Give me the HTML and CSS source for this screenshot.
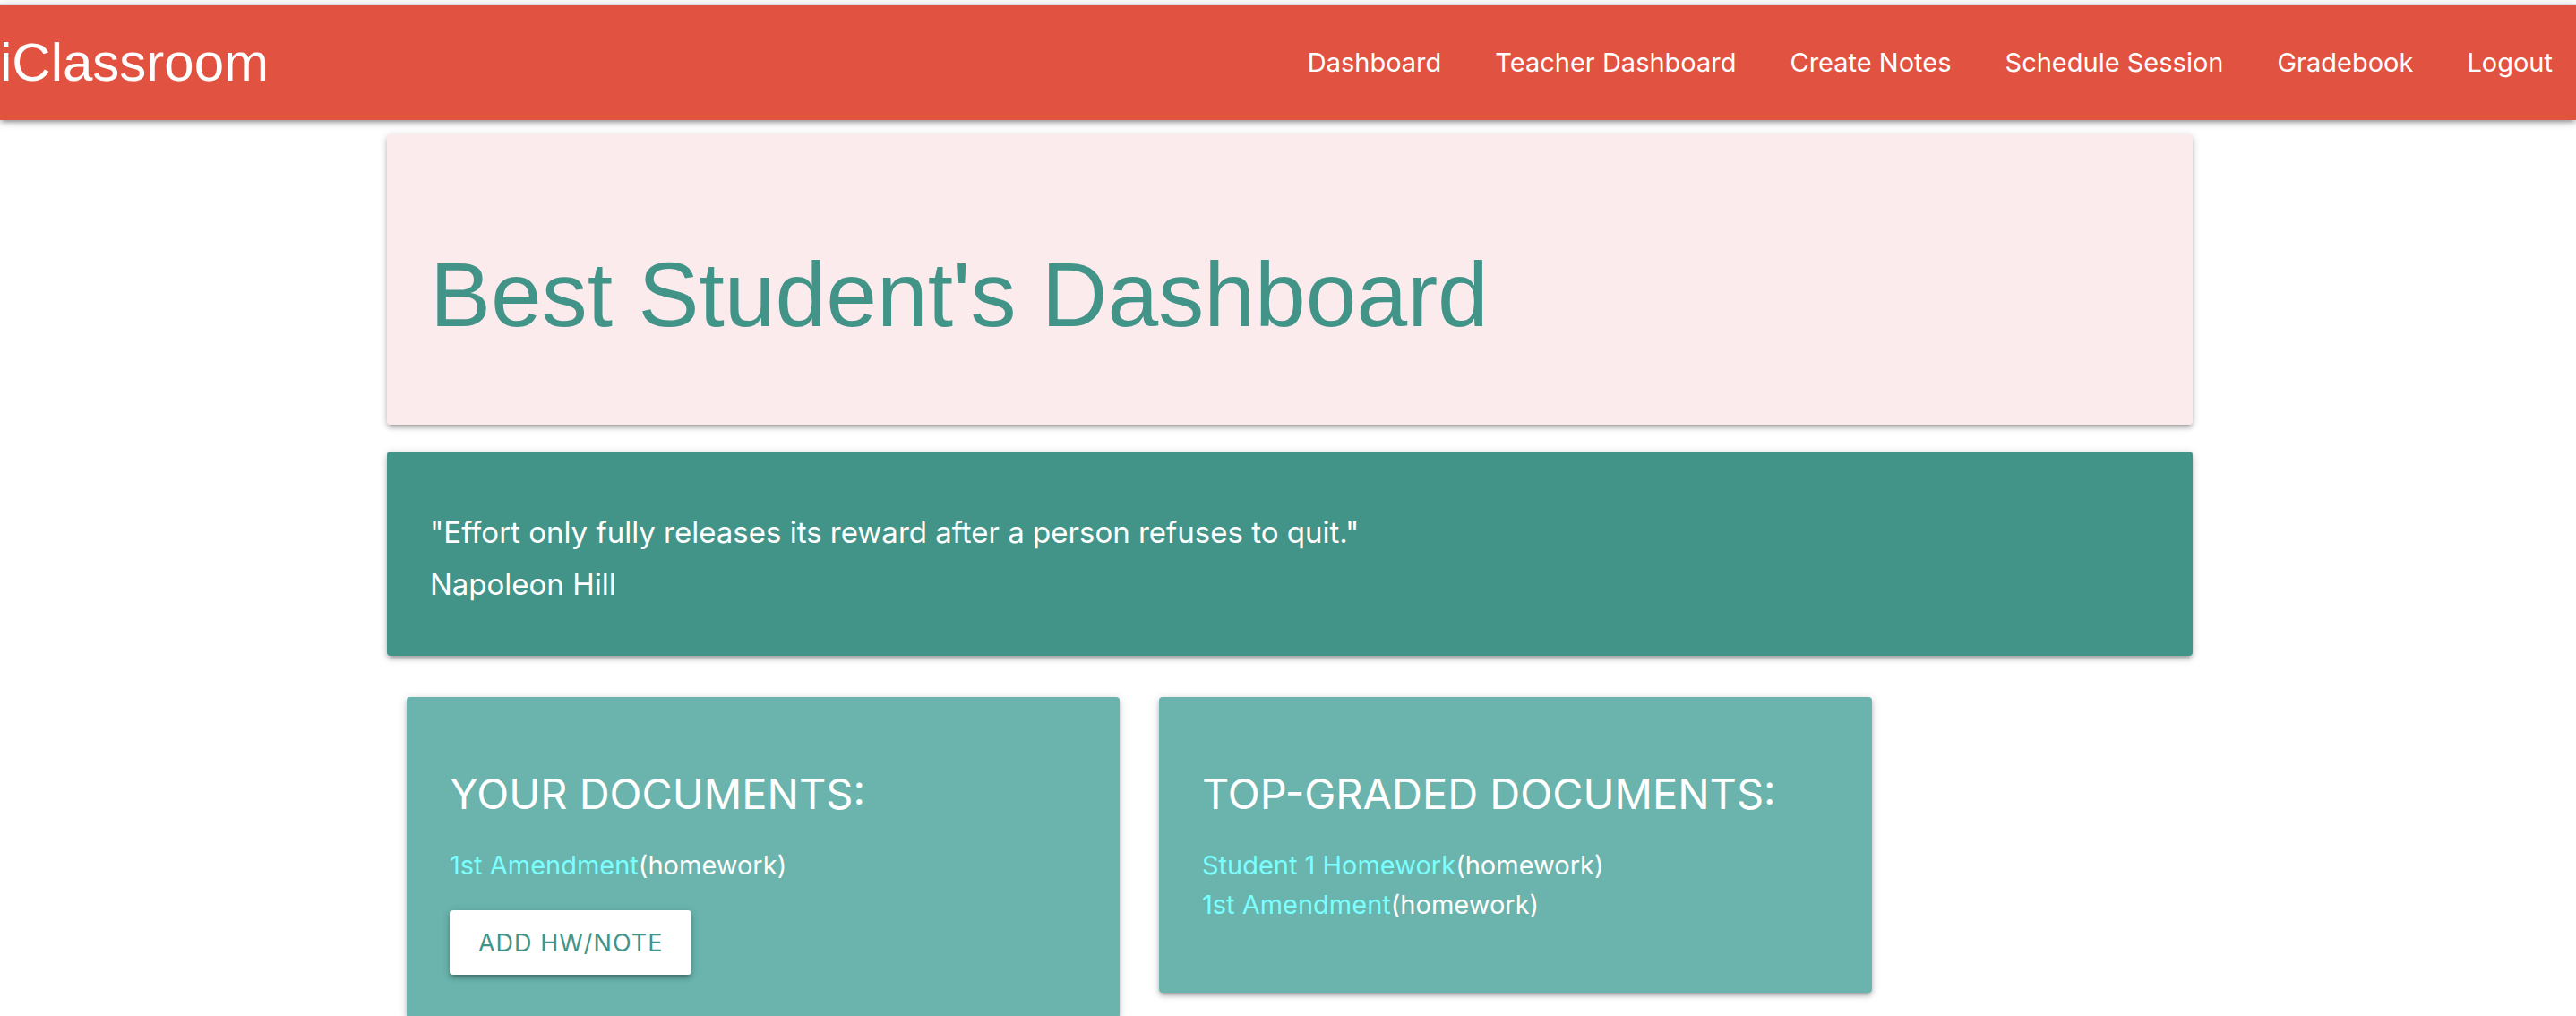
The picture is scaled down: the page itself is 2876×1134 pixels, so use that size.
FILE: index.html
```html
<!DOCTYPE html>
<html lang="en">
<head>
<meta charset="utf-8">
<meta name="viewport" content="width=device-width, initial-scale=1">
<title>iClassroom</title>
<link rel="stylesheet" href="styles.css">
</head>
<body>
<header class="topbar">
  <a class="brand" href="#">iClassroom</a>
  <nav class="nav">
    <a href="#">Dashboard</a>
    <a href="#">Teacher Dashboard</a>
    <a href="#">Create Notes</a>
    <a href="#">Schedule Session</a>
    <a href="#">Gradebook</a>
    <a href="#">Logout</a>
  </nav>
</header>
<main class="container">
  <section class="card banner">
    <h1 class="banner-title">Best Student's Dashboard</h1>
  </section>
  <section class="card quote">
    <p>"Effort only fully releases its reward after a person refuses to quit."</p>
    <p>Napoleon Hill</p>
  </section>
  <div class="row">
    <section class="card docs">
      <h2 class="docs-title">YOUR DOCUMENTS:</h2>
      <ul class="docs-list">
        <li><a href="#">1st Amendment</a>(homework)</li>
      </ul>
      <button class="btn" type="button">ADD HW/NOTE</button>
    </section>
    <section class="card docs">
      <h2 class="docs-title">TOP-GRADED DOCUMENTS:</h2>
      <ul class="docs-list">
        <li><a href="#">Student 1 Homework</a>(homework)</li>
        <li><a href="#">1st Amendment</a>(homework)</li>
      </ul>
    </section>
  </div>
</main>
</body>
</html>
```
FILE: styles.css
```css
:root {
  --coral: #e25241;
  --blush: #fbebec;
  --teal: #429488;
  --teal-light: #6ab4ad;
  --aqua: #7bffff;
  --display: "Liberation Sans", Arial, sans-serif;
  --shadow: 0 4px 4px 0 rgba(0, 0, 0, .14), 0 6px 2px -4px rgba(0, 0, 0, .12), 0 2px 10px 0 rgba(0, 0, 0, .2);
}

* {
  box-sizing: border-box;
}

body {
  margin: 0;
  padding-top: 4px;
  background: #fff;
  color: #fff;
  font-family: Inter, "Liberation Sans", sans-serif;
  font-size: 29px;
  line-height: 44px;
}

h1, h2, p, ul {
  margin: 0;
  padding: 0;
  font-weight: 400;
}

a {
  text-decoration: none;
}

.topbar {
  display: flex;
  justify-content: space-between;
  align-items: center;
  min-height: 130px;
  padding-right: 26px;
  border-top: 2px solid #dcdcdf;
  background: var(--coral);
  box-shadow: var(--shadow);
}

.brand {
  color: #fff;
  font-family: var(--display);
  font-size: 60px;
  line-height: 72px;
}

.nav {
  display: flex;
  flex-wrap: wrap;
  gap: 60px;
}

.nav a {
  color: #fff;
}

.container {
  width: 70.1%;
  margin-left: 15.02%;
  padding-top: 16px;
}

.card {
  padding: 48px;
  border-radius: 4px;
  box-shadow: var(--shadow);
}

.banner {
  padding-top: 120px;
  padding-bottom: 86px;
  background: var(--blush);
  color: var(--teal);
}

.banner-title {
  font-family: var(--display);
  font-size: 102px;
  line-height: 118px;
}

.quote {
  margin-top: 30px;
  padding-top: 61px;
  padding-bottom: 51px;
  background: var(--teal);
  font-size: 33px;
  line-height: 58px;
}

.row {
  display: flex;
  align-items: flex-start;
  gap: 44px;
  margin-top: 46px;
  padding: 0 22px;
}

.docs {
  width: 40.36%;
  background: var(--teal-light);
}

.docs-title {
  margin: 32px 0 30px;
  font-size: 47px;
  line-height: 56px;
}

.docs-list {
  margin-bottom: 28px;
  list-style: none;
}

.docs-list a {
  color: var(--aqua);
}

.btn {
  display: block;
  height: 72px;
  padding: 0 32px;
  border: 0;
  border-radius: 4px;
  background: #fff;
  color: var(--teal);
  box-shadow: var(--shadow);
  font-family: inherit;
  font-size: 27px;
  letter-spacing: 1px;
}
```
